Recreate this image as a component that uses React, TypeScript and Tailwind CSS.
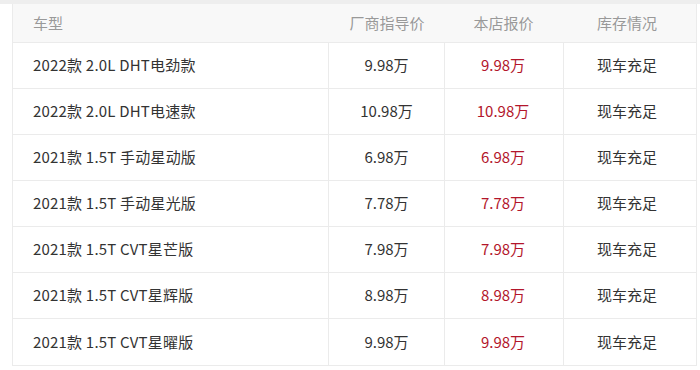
const rows = [
  { name: '2022款 2.0L DHT电劲款', guide: '9.98万', price: '9.98万' },
  { name: '2022款 2.0L DHT电速款', guide: '10.98万', price: '10.98万' },
  { name: '2021款 1.5T 手动星动版', guide: '6.98万', price: '6.98万' },
  { name: '2021款 1.5T 手动星光版', guide: '7.78万', price: '7.78万' },
  { name: '2021款 1.5T CVT星芒版', guide: '7.98万', price: '7.98万' },
  { name: '2021款 1.5T CVT星辉版', guide: '8.98万', price: '8.98万' },
  { name: '2021款 1.5T CVT星曜版', guide: '9.98万', price: '9.98万' },
];

export default function App() {
  return (
    <div
      className="w-[700px] h-[370px] bg-white overflow-hidden"
      style={{ fontFamily: '"Microsoft YaHei", "Noto Sans CJK SC", sans-serif' }}
    >
      {/* top strip */}
      <div className="h-[4px] bg-[#eeeeee]" />

      <div className="ml-[12px] w-[685px] border-x border-b border-[#ebebeb]">
        {/* Header */}
        <div className="flex h-[39px] bg-[#f8f8f8] border-b border-[#ebebeb] text-[15px] text-[#999999]">
          <div className="w-[316px] flex items-center pl-[20px]">车型</div>
          <div className="w-[116px] flex items-center justify-center">厂商指导价</div>
          <div className="w-[119px] flex items-center justify-center pr-[2px]">本店报价</div>
          <div className="flex-1 flex items-center justify-center pr-[6px]">库存情况</div>
        </div>

        {rows.map((r, i) => (
          <div
            key={i}
            className={`flex h-[46px] text-[15px] text-[#333333] ${i < rows.length - 1 ? 'border-b border-[#ebebeb]' : ''}`}
          >
            <div className="w-[316px] flex items-center pl-[20px] border-r border-[#ebebeb] tracking-[0.2px]">{r.name}</div>
            <div className="w-[116px] flex items-center justify-center border-r border-[#ebebeb]">{r.guide}</div>
            <div className="w-[119px] flex items-center justify-center pr-[2px] border-r border-[#ebebeb] text-[#b3162b]">
              {r.price}
            </div>
            <div className="flex-1 flex items-center justify-center pr-[6px]">现车充足</div>
          </div>
        ))}
      </div>
    </div>
  );
}
